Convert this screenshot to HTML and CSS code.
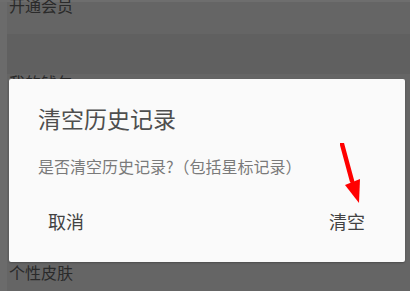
FILE: index.html
```html
<!DOCTYPE html>
<html lang="zh-CN">
<head>
<meta charset="utf-8">
<link rel="stylesheet" href="styles.css">
</head>
<body>
<div class="page">
  <div class="edge"></div>
  <ul class="list">
    <li class="item first">开通会员</li>
    <li class="band"></li>
    <li class="item">我的钱包</li>
    <li class="item spacer"></li>
    <li class="item">个性皮肤</li>
  </ul>
  <div class="dialog">
    <div class="title">清空历史记录</div>
    <div class="msg">是否清空历史记录?（包括星标记录）</div>
    <div class="actions">
      <span class="btn cancel">取消</span>
      <span class="btn ok">清空</span>
    </div>
    <svg class="arrow" width="30" height="70" viewBox="0 0 30 70">
      <line x1="2" y1="1" x2="12" y2="38" stroke="#ff0000" stroke-width="4.5" stroke-linecap="round"/>
      <polygon points="5,42 20,36 19,60" fill="#ff0000"/>
    </svg>
  </div>
</div>
</body>
</html>
```
FILE: styles.css
```css
html, body {
  margin: 0;
  padding: 0;
}
body {
  width: 410px;
  height: 291px;
  overflow: hidden;
  background: #656565;
  font-family: "Noto Sans CJK SC", "Noto Sans", sans-serif;
}
.page {
  position: relative;
  width: 410px;
  height: 291px;
  background: #656565;
  border-top: 2px solid #6e6e6e;
  box-sizing: border-box;
}
.edge {
  position: absolute;
  left: 0;
  top: 0;
  width: 7px;
  height: 291px;
  background: #6b6b6b;
}
.list {
  list-style: none;
  margin: 0;
  padding: 0;
}
.item {
  padding-left: 9px;
  font-size: 16px;
  line-height: 16px;
  color: #2a2a2a;
  height: 32px;
  position: relative;
}
.item.first {
  margin-top: -5px;
  height: 37px;
}
.band {
  height: 40px;
  background: #606060;
}
.item.spacer {
  height: 158px;
}
.dialog {
  position: absolute;
  left: 9px;
  top: 77px;
  width: 396px;
  height: 183px;
  background: #fafafa;
  border-radius: 2px;
  box-shadow: 0 1px 2px rgba(0,0,0,0.25);
  box-sizing: border-box;
  padding: 27px 0 0 29px;
}
.title {
  font-size: 23px;
  line-height: 24px;
  color: #4e4e4e;
}
.msg {
  margin-top: 28px;
  font-size: 16px;
  line-height: 16px;
  color: #7a7a7a;
}
.actions {
  display: flex;
  justify-content: space-between;
  margin-top: 38px;
  padding: 0 40px 0 10px;
}
.btn {
  font-size: 18px;
  line-height: 18px;
  color: #424242;
}
.arrow {
  position: absolute;
  left: 331px;
  top: 64px;
}
```
